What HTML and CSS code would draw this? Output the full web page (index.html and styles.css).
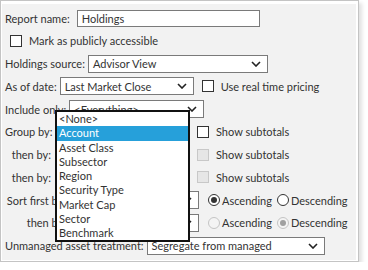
FILE: index.html
```html
<!DOCTYPE html>
<html lang="en">
<head>
    <meta charset="UTF-8">
    <title>Report settings</title>
    <link rel="stylesheet" href="styles.css">
</head>
<body>

<div class="frame">
    <div class="panel">

        <div class="row first">
            <span class="label name-label">Report name:</span>
            <div class="textbox report-name">Holdings</div>
        </div>

        <div class="row check-row">
            <span class="box"></span>
            <span>Mark as publicly accessible</span>
        </div>

        <div class="row">
            <span class="label">Holdings source:</span>
            <div class="select w-source">Advisor View<svg class="chev" viewBox="0 0 10 6"><path d="M1 1 L5 5 L9 1"/></svg></div>
        </div>

        <div class="row">
            <span class="label">As of date:</span>
            <div class="select w-date">Last Market Close<svg class="chev" viewBox="0 0 10 6"><path d="M1 1 L5 5 L9 1"/></svg></div>
            <span class="box"></span>
            <span>Use real time pricing</span>
        </div>

        <div class="row">
            <span class="label">Include only:</span>
            <div class="select w-include">&lt;Everything&gt;<svg class="chev" viewBox="0 0 10 6"><path d="M1 1 L5 5 L9 1"/></svg></div>
        </div>

        <div class="row">
            <span class="label group-label">Group by:</span>
            <div class="select w-group">Account<svg class="chev" viewBox="0 0 10 6"><path d="M1 1 L5 5 L9 1"/></svg></div>
            <span class="box"></span>
            <span>Show subtotals</span>
        </div>

        <div class="row">
            <span class="label group-label">then by:</span>
            <div class="select w-group"><svg class="chev" viewBox="0 0 10 6"><path d="M1 1 L5 5 L9 1"/></svg></div>
            <span class="box disabled"></span>
            <span>Show subtotals</span>
        </div>

        <div class="row">
            <span class="label group-label">then by:</span>
            <div class="select w-group"><svg class="chev" viewBox="0 0 10 6"><path d="M1 1 L5 5 L9 1"/></svg></div>
            <span class="box disabled"></span>
            <span>Show subtotals</span>
        </div>

        <div class="row">
            <span class="label sort-label">Sort first by:</span>
            <div class="select w-sort">Name<svg class="chev" viewBox="0 0 10 6"><path d="M1 1 L5 5 L9 1"/></svg></div>
            <span class="radio checked"></span>
            <span class="opt">Ascending</span>
            <span class="radio"></span>
            <span>Descending</span>
        </div>

        <div class="row">
            <span class="label sort-label">then by:</span>
            <div class="select w-sort"><svg class="chev" viewBox="0 0 10 6"><path d="M1 1 L5 5 L9 1"/></svg></div>
            <span class="radio disabled"></span>
            <span class="opt">Ascending</span>
            <span class="radio disabled checked"></span>
            <span>Descending</span>
        </div>

        <div class="row">
            <span class="label">Unmanaged asset treatment:</span>
            <div class="select w-unmanaged">Segregate from managed<svg class="chev" viewBox="0 0 10 6"><path d="M1 1 L5 5 L9 1"/></svg></div>
        </div>

        <ul class="dropdown-list">
            <li>&lt;None&gt;</li>
            <li class="active">Account</li>
            <li>Asset Class</li>
            <li>Subsector</li>
            <li>Region</li>
            <li>Security Type</li>
            <li>Market Cap</li>
            <li>Sector</li>
            <li>Benchmark</li>
        </ul>

    </div>
</div>

</body>
</html>
```

FILE: styles.css
```css
body {
    margin: 0;
    background: #fff;
    font-family: 'Segoe UI', Lato, sans-serif;
    font-size: 11px;
    color: #333;
}

.frame {
    width: 357px;
    height: 256px;
    border: 1px solid #c4c4c4;
    padding: 3px 0 1px 0;
    box-shadow: 3px 3px 4px rgba(0, 0, 0, 0.12);
}

.panel {
    position: relative;
    width: 354px;
    height: 100%;
    margin-left: 1px;
    background-color: #f2f2f2;
    padding-top: 6px;
    box-sizing: border-box;
    display: flex;
    flex-direction: column;
    gap: 4.75px;
}

.row {
    display: flex;
    align-items: center;
    height: 18px;
    padding-left: 3px;
    white-space: nowrap;
}

.row.first {
    height: 17px;
}

.row.check-row {
    padding-left: 8px;
}

.label {
    margin-right: 3px;
}

.name-label {
    margin-right: 7px;
}

.group-label {
    width: 46px;
    margin-right: 5px;
    text-align: right;
}

.sort-label {
    width: 61px;
    margin-right: 10px;
    text-align: right;
}

.textbox, .select {
    box-sizing: border-box;
    height: 100%;
    background: #fff;
    border: 1px solid #7a7a7a;
    padding: 0 4px;
    display: flex;
    align-items: center;
    position: relative;
}

.report-name { width: 183px; }
.w-source { width: 180px; }
.w-date { width: 134px; margin-right: 8px; }
.w-include { width: 135px; }
.w-group { width: 133px; margin-right: 8px; }
.w-sort { width: 123px; margin-right: 9px; }
.w-unmanaged { width: 178px; }

.chev {
    position: absolute;
    right: 6px;
    top: 5px;
    width: 10px;
    height: 6px;
    fill: none;
    stroke: #222;
    stroke-width: 1.6;
}

.box {
    width: 10px;
    height: 10px;
    border: 1px solid #333;
    background: #fff;
    margin-right: 7px;
    flex-shrink: 0;
}

.box.disabled {
    background: #e6e6e6;
    border-color: #c8c8c8;
}

.radio {
    box-sizing: border-box;
    width: 12px;
    height: 12px;
    border: 1px solid #333;
    border-radius: 50%;
    background: #fff;
    margin-right: 2px;
    position: relative;
    flex-shrink: 0;
}

.radio.checked::after {
    content: '';
    position: absolute;
    left: 2px;
    top: 2px;
    width: 6px;
    height: 6px;
    border-radius: 50%;
    background: #333;
}

.radio.disabled {
    border-color: #c4c4c4;
    background: #f4f4f4;
}

.radio.disabled.checked::after {
    background: #a0a0a0;
}

.opt {
    margin-right: 5px;
}

.dropdown-list {
    position: absolute;
    left: 53px;
    top: 106px;
    width: 131px;
    margin: 0;
    padding: 0;
    list-style: none;
    background: #fff;
    border: 2px solid #111;
}

.dropdown-list li {
    height: 14.25px;
    line-height: 14.25px;
    padding-left: 2px;
}

.dropdown-list li.active {
    background-color: #26a0da;
    color: #fff;
}
```
